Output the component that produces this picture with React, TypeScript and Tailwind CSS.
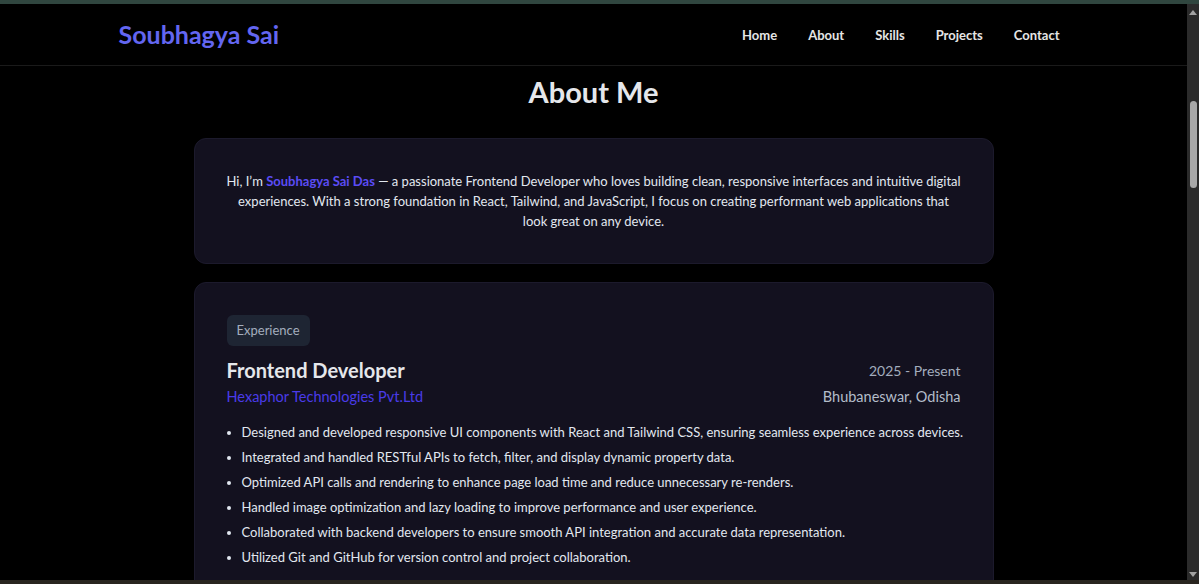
const NAV_LINKS = ["Home", "About", "Skills", "Projects", "Contact"];

const POINTS = [
  "Designed and developed responsive UI components with React and Tailwind CSS, ensuring seamless experience across devices.",
  "Integrated and handled RESTful APIs to fetch, filter, and display dynamic property data.",
  "Optimized API calls and rendering to enhance page load time and reduce unnecessary re-renders.",
  "Handled image optimization and lazy loading to improve performance and user experience.",
  "Collaborated with backend developers to ensure smooth API integration and accurate data representation.",
  "Utilized Git and GitHub for version control and project collaboration.",
];

function Navbar() {
  return (
    <header className="h-[62px] shrink-0 border-b border-[#1a1a1a]">
      <div className="mx-auto flex h-full w-[950px] items-center justify-between">
        <span className="text-[25px] font-bold text-[#6366f1]">Soubhagya Sai</span>
        <nav className="flex items-center gap-[31px] pr-[9px] pt-[2px]">
          {NAV_LINKS.map((link) => (
            <a key={link} className="text-[13px] font-bold text-[#e5e5e5]">
              {link}
            </a>
          ))}
        </nav>
      </div>
    </header>
  );
}

function Scrollbar() {
  return (
    <div className="flex w-[12px] shrink-0 flex-col items-center bg-[#2b2b2b]">
      <svg width="8" height="5" viewBox="0 0 8 5" className="mt-[6px]">
        <path d="M0 5 L4 0 L8 5 Z" fill="#a3a3a3" />
      </svg>
      <div className="mt-[86px] h-[87px] w-[7px] rounded-full bg-[#a8a8a8]" />
      <div className="flex-1" />
      <svg width="8" height="5" viewBox="0 0 8 5" className="mb-[3px]">
        <path d="M0 0 L8 0 L4 5 Z" fill="#a3a3a3" />
      </svg>
    </div>
  );
}

export default function App() {
  return (
    <div
      className="flex h-[584px] w-full flex-col overflow-hidden bg-black"
      style={{ fontFamily: 'Lato, "Open Sans", sans-serif' }}
    >
      <div className="h-[4px] shrink-0 bg-[#30463f]" />
      <div className="flex min-h-0 flex-1">
        <main className="flex min-w-0 flex-1 flex-col overflow-hidden">
          <Navbar />
          <section className="flex flex-col items-center pt-[8px]">
            <h2 className="text-[29px] font-bold leading-9 text-[#e5e7eb]">About Me</h2>

            <div className="mt-7 w-[800px] rounded-xl border border-[#1c1a2c] bg-[#13111f] p-8 text-center text-[13px] leading-5 text-[#e2e8f0]">
              <span className="block whitespace-nowrap">
                Hi, I&rsquo;m <span className="font-bold text-[#5b4cf5]">Soubhagya Sai Das</span> &mdash; a
                passionate Frontend Developer who loves building clean, responsive interfaces and intuitive digital
              </span>
              <span className="block whitespace-nowrap">
                experiences. With a strong foundation in React, Tailwind, and JavaScript, I focus on creating
                performant web applications that
              </span>
              <span className="block whitespace-nowrap">look great on any device.</span>
            </div>

            <div className="mt-[18px] w-[800px] rounded-xl border border-[#1c1a2c] bg-[#13111f] p-8">
              <span className="inline-block rounded-md bg-[#1e2533] px-2.5 py-1.5 text-[13px] leading-[19px] text-[#a3adbd]">
                Experience
              </span>
              <div className="mt-[10px] flex items-center justify-between">
                <h3 className="text-[20px] font-bold leading-7 text-[#e5e7eb]">Frontend Developer</h3>
                <span className="text-[14px] text-[#a3adbd]">2025 - Present</span>
              </div>
              <div className="mt-[1px] flex items-center justify-between text-[14.5px] leading-6">
                <span className="text-[#4a3be8]">Hexaphor Technologies Pvt.Ltd</span>
                <span className="text-[#b4bdca]">Bhubaneswar, Odisha</span>
              </div>
              <ul className="mt-[13px] list-disc space-y-[5px] pl-[15px] text-[13px] leading-5 text-[#e2e8f0] marker:text-[#e2e8f0]">
                {POINTS.map((p) => (
                  <li key={p} className="whitespace-nowrap">
                    {p}
                  </li>
                ))}
              </ul>
            </div>
          </section>
        </main>
        <Scrollbar />
      </div>
      <div className="h-[4px] shrink-0 bg-[#29251f]" />
    </div>
  );
}
